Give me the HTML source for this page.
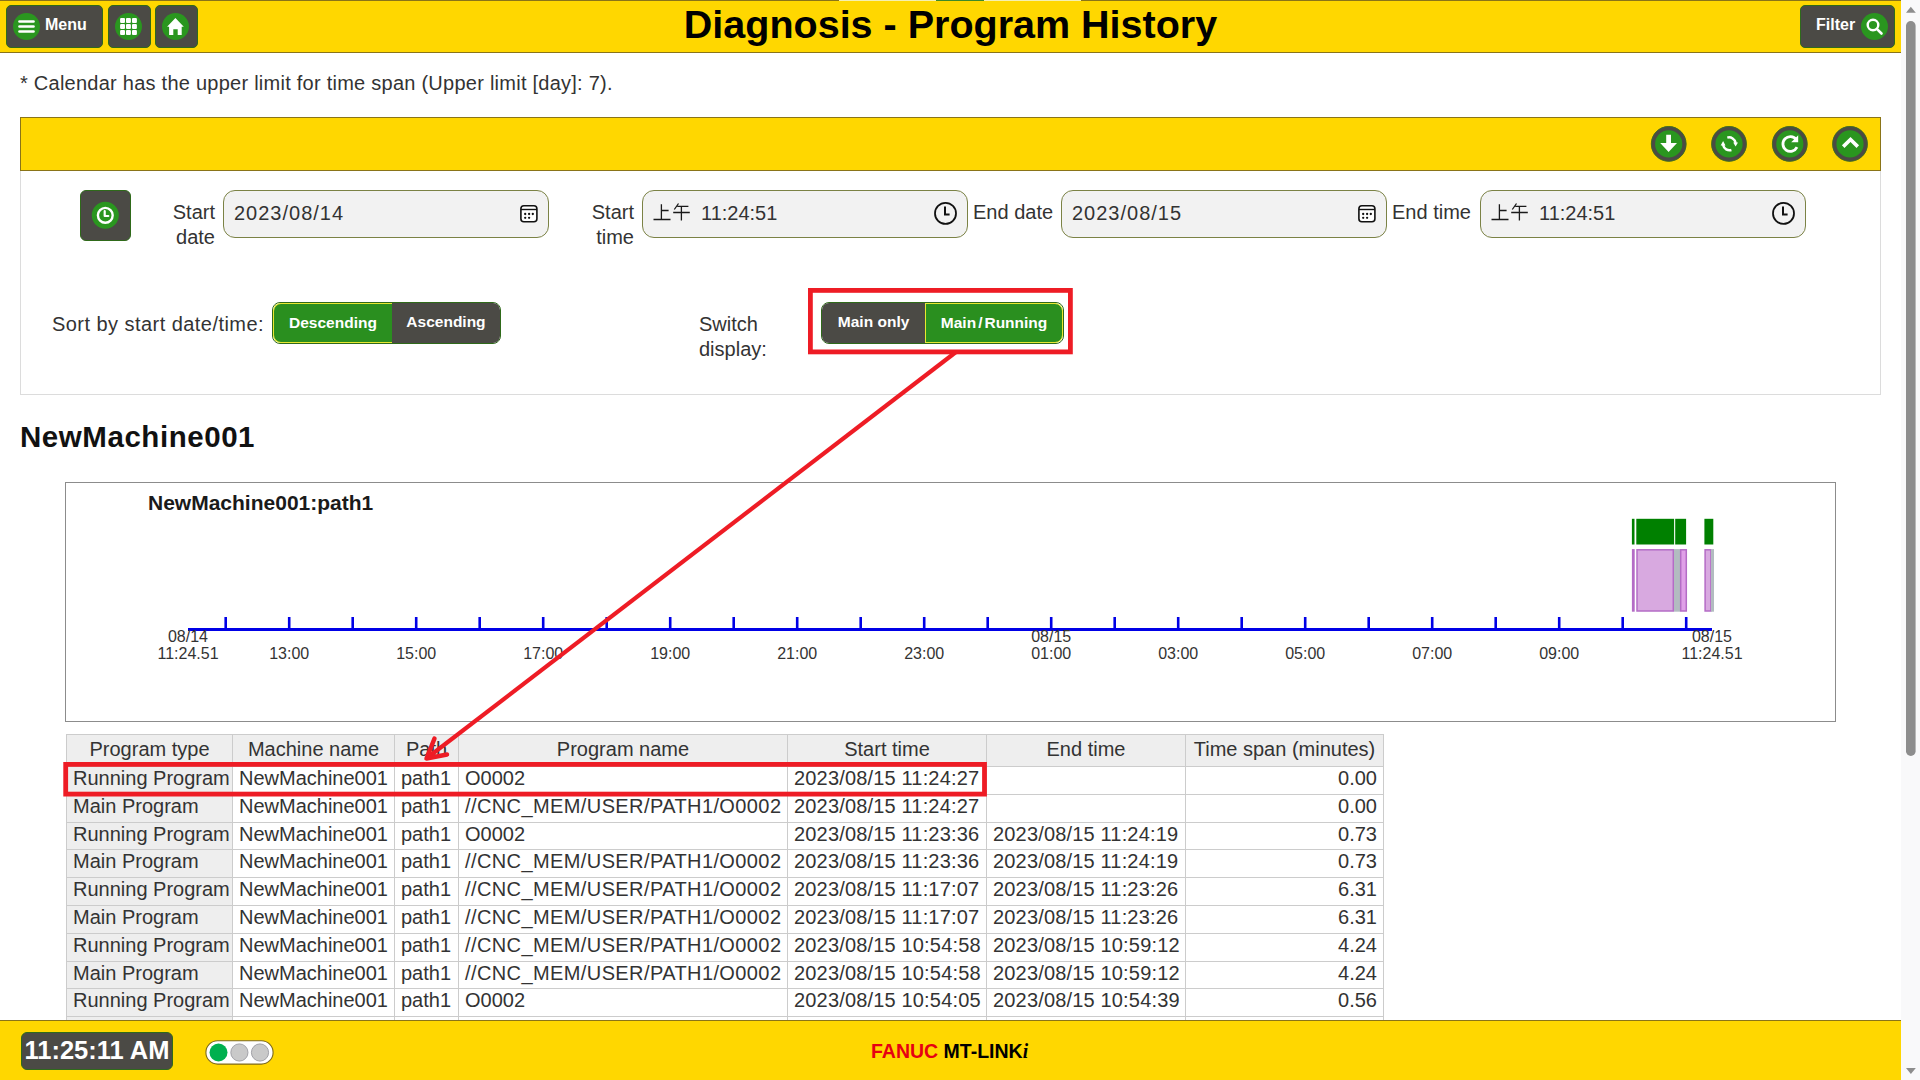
<!DOCTYPE html>
<html><head><meta charset="utf-8">
<style>
*{box-sizing:border-box;margin:0;padding:0}
html,body{width:1920px;height:1080px;overflow:hidden;background:#fff;font-family:"Liberation Sans",sans-serif;color:#222}
.abs{position:absolute}
.hdr{position:absolute;left:0;top:0;width:1901px;height:53px;background:#ffd700;border-top:1px solid #8a7418;border-bottom:1px solid #8a7418}
.hbtn{position:absolute;top:5px;height:43px;background:#4b4a45;border:1px solid #2f6a1a;border-radius:5px}
.gc{position:absolute;border-radius:50%;background:#2a961f}
.title{position:absolute;left:0;width:1901px;top:-1px;text-align:center;font-weight:bold;font-size:39.5px;line-height:50px;color:#000}
.sb{position:absolute;left:1901px;top:0;width:19px;height:1080px;background:#f9f9fa}
.panel{position:absolute;left:20px;top:117px;width:1861px;height:278px;border:1px solid #dcdcdc;background:#fff}
.phdr{position:absolute;left:20px;top:117px;width:1861px;height:54px;background:#ffd700;border:1px solid #8a7418}
.cbtn{position:absolute;top:126px;width:35px;height:35px;border-radius:50%;background:#2a961f;border:3.5px solid #4b4a45}
.lbl{position:absolute;font-size:20px;line-height:25px;color:#333}
.inp{position:absolute;top:190px;width:326px;height:48px;background:#f2f2f2;border:1.5px solid #7b8245;border-radius:12px}
.inp span{position:absolute;left:10px;top:0;line-height:44px;font-size:20px;letter-spacing:1px;color:#333}
.tog{position:absolute;height:42px;border-radius:8px;overflow:hidden;border:1px solid #2f6a1a;display:flex}
.tog div{height:100%;color:#fff;font-weight:bold;font-size:15.5px;line-height:38px;text-align:center}
.on{background:#2a8f1f}
.off{background:#4b4a45}
.tbl{position:absolute;left:66px;top:734px;border-collapse:collapse;font-size:20px;color:#222}
.tbl td,.tbl th{border:1px solid #cfcfcf;padding:0 6px;white-space:nowrap;font-weight:normal;height:28px}
.tbl th{background:#eeeeee;height:32px;text-align:center}
.tbl td:first-child{background:#eeeeee}
.tbl td.r{text-align:right}
.ftr{position:absolute;left:0;top:1020px;width:1901px;height:60px;background:#ffd700;border-top:1px solid #8a7418}
.th{position:absolute;height:32px;line-height:30px;text-align:center;font-size:20px;color:#333;white-space:nowrap}
.td{position:absolute;height:28px;line-height:25.5px;padding:0 6px;font-size:20px;color:#333;white-space:nowrap}
.td.r{text-align:right}
.jp{width:40px;height:20px}
</style></head><body>

<!-- header -->
<div class="hdr">
  <div style="position:absolute;left:839px;top:-1px;width:242px;height:1px;background:#f5f0b0"></div>
  <div style="position:absolute;left:936px;top:-1px;width:48px;height:1px;background:#3d8a2a"></div>
</div>
<div class="hbtn" style="left:6px;width:97px"></div>
<div class="gc" style="left:13px;top:13px;width:27px;height:27px"></div>
<svg class="abs" style="left:13px;top:13px" width="27" height="27" viewBox="0 0 27 27"><g stroke="#fff" stroke-width="2.6" stroke-linecap="round"><line x1="6.5" y1="8.5" x2="20.5" y2="8.5"/><line x1="6.5" y1="13.5" x2="20.5" y2="13.5"/><line x1="6.5" y1="18.5" x2="20.5" y2="18.5"/></g></svg>
<div class="abs" style="left:45px;top:14px;font-size:16px;font-weight:bold;color:#fff;line-height:22px">Menu</div>
<div class="hbtn" style="left:108px;width:43px"></div>
<div class="gc" style="left:115px;top:13px;width:27px;height:27px"></div>
<svg class="abs" style="left:115px;top:13px" width="27" height="27" viewBox="0 0 27 27"><g fill="#fff"><rect x="5.1" y="5.1" width="4.9" height="4.9" rx="1"/><rect x="11.0" y="5.1" width="4.9" height="4.9" rx="1"/><rect x="17.0" y="5.1" width="4.9" height="4.9" rx="1"/><rect x="5.1" y="11.0" width="4.9" height="4.9" rx="1"/><rect x="11.0" y="11.0" width="4.9" height="4.9" rx="1"/><rect x="17.0" y="11.0" width="4.9" height="4.9" rx="1"/><rect x="5.1" y="17.1" width="4.9" height="4.9" rx="1"/><rect x="11.0" y="17.1" width="4.9" height="4.9" rx="1"/><rect x="17.0" y="17.1" width="4.9" height="4.9" rx="1"/></g></svg>
<div class="hbtn" style="left:155px;width:43px"></div>
<div class="gc" style="left:162px;top:13px;width:27px;height:27px"></div>
<svg class="abs" style="left:162px;top:13px" width="27" height="27" viewBox="0 0 27 27"><path fill="#fff" d="M13.4 5.1 L21.8 13.75 L19.7 13.75 L19.7 22 L15.7 22 L15.7 16.3 L11.3 16.3 L11.3 22 L7.1 22 L7.1 13.75 L5.1 13.75 Z"/></svg>
<div class="title">Diagnosis - Program History</div>
<div class="hbtn" style="left:1800px;width:95px"></div>
<div class="abs" style="left:1816px;top:14px;font-size:16px;font-weight:bold;color:#fff;line-height:22px">Filter</div>
<div class="gc" style="left:1861px;top:13px;width:27px;height:27px"></div>
<svg class="abs" style="left:1861px;top:13px" width="27" height="27" viewBox="0 0 27 27"><circle cx="12" cy="12" r="5.3" fill="none" stroke="#fff" stroke-width="2.4"/><line x1="15.8" y1="15.8" x2="20.5" y2="20.5" stroke="#fff" stroke-width="2.6" stroke-linecap="round"/></svg>

<!-- scrollbar -->
<div class="sb">
  <svg class="abs" style="left:0;top:0" width="19" height="1080"><path d="M5 12.8 L9.8 6.8 L14.8 12.8 Z" fill="#8d8d8d"/><rect x="5" y="21" width="9.6" height="735" rx="4.8" fill="#8d8d8d"/><path d="M5 1068 L14.8 1068 L9.9 1074 Z" fill="#8d8d8d"/></svg>
</div>

<!-- notice -->
<div class="abs" style="left:20px;top:71px;font-size:20px;line-height:25px;letter-spacing:0.25px;color:#333">* Calendar has the upper limit for time span (Upper limit [day]: 7).</div>

<!-- panel -->
<div class="panel"></div>
<div class="phdr"></div>
<svg class="abs" style="left:1640px;top:120px" width="230" height="50" viewBox="1640 120 230 50">
<g fill="#2a961f" stroke="#4b4a45" stroke-width="4"><circle cx="1668.7" cy="143.9" r="15.6"/><circle cx="1729" cy="143.9" r="15.6"/><circle cx="1789.8" cy="143.9" r="15.6"/><circle cx="1850" cy="143.9" r="15.6"/></g><g fill="none" stroke="#3f6e1c" stroke-width="0.9"><circle cx="1668.7" cy="143.9" r="17.4"/><circle cx="1729" cy="143.9" r="17.4"/><circle cx="1789.8" cy="143.9" r="17.4"/><circle cx="1850" cy="143.9" r="17.4"/></g>
<path fill="#fff" d="M1666.2 134.8 H1671 V143.1 H1677 L1668.6 152 L1660.2 143.1 H1666.2 Z"/>
<g fill="none" stroke="#fff" stroke-width="2.5"><path d="M1727.3 137.6 A6.6 6.6 0 0 1 1735.6 143"/><path d="M1731.4 150 A6.6 6.6 0 0 1 1723.1 145"/></g>
<path fill="#fff" d="M1733.2 142.4 L1738 142.4 L1735.6 146.6 Z M1720.7 145.4 L1725.5 145.4 L1723.1 141 Z"/>
<path d="M1797 147.2 A7.4 7.4 0 1 1 1796.3 139.6" fill="none" stroke="#fff" stroke-width="2.8"/>
<path fill="#fff" d="M1798.2 135.2 V142.2 H1791.2 Z"/>
<path d="M1843.2 146.6 L1850.5 139.5 L1857.8 146.6" fill="none" stroke="#fff" stroke-width="3.6"/>
</svg>

<!-- form -->
<div class="abs" style="left:80px;top:190px;width:51px;height:51px;background:#4b4a45;border:1px solid #2f6a1a;border-radius:6px"></div>
<svg class="abs" style="left:91px;top:201px" width="29" height="29" viewBox="0 0 29 29"><circle cx="14.3" cy="14.3" r="13.5" fill="#2a961f"/><circle cx="14.3" cy="14.3" r="7.4" fill="none" stroke="#fff" stroke-width="2.4"/><path d="M13.7 10.2 V15 H17.3" fill="none" stroke="#fff" stroke-width="2.2" stroke-linecap="round" stroke-linejoin="round"/></svg>

<div class="lbl" style="left:140px;top:200px;width:75px;text-align:right">Start<br>date</div>
<div class="inp" style="left:223px"><span>2023/08/14</span></div>
<svg class="abs" style="left:518px;top:203px" width="22" height="22" viewBox="0 0 22 22"><rect x="2.9" y="2.7" width="16" height="16" rx="3" fill="#fff" stroke="#111" stroke-width="1.6"/><line x1="2.9" y1="6.5" x2="18.9" y2="6.5" stroke="#111" stroke-width="1.4"/><g fill="#111"><circle cx="7.2" cy="11" r="1.15"/><circle cx="11.1" cy="11" r="1.15"/><circle cx="14.8" cy="11" r="1.15"/><circle cx="7.2" cy="14.8" r="1.15"/><circle cx="11.1" cy="14.8" r="1.15"/></g></svg>

<div class="lbl" style="left:560px;top:200px;width:74px;text-align:right">Start<br>time</div>
<div class="inp" style="left:642px"><span style="left:58px;letter-spacing:0">11:24:51</span></div>
<svg class="abs" style="left:650px;top:200px" width="45" height="24" viewBox="650 200 45 24"><g stroke="#1a1a1a" stroke-width="1.3" fill="none"><path d="M661.4 204.3 V219.5 M661.4 210.5 H668.6 M653.5 219.5 H670.5 M678.5 203.5 L674.3 209.5 M677.3 206.4 H688.4 M673.2 212.5 H689.8 M681.4 206.4 V220.6"/></g></svg>
<svg class="abs" style="left:932px;top:201px" width="26" height="26" viewBox="0 0 26 26"><circle cx="13.5" cy="12.4" r="10.5" fill="none" stroke="#111" stroke-width="1.8"/><path d="M13 5.4 V13.5 H17.6" fill="none" stroke="#111" stroke-width="2"/></svg>

<div class="lbl" style="left:973px;top:200px">End date</div>
<div class="inp" style="left:1061px"><span>2023/08/15</span></div>
<svg class="abs" style="left:1356px;top:203px" width="22" height="22" viewBox="0 0 22 22"><rect x="2.9" y="2.7" width="16" height="16" rx="3" fill="#fff" stroke="#111" stroke-width="1.6"/><line x1="2.9" y1="6.5" x2="18.9" y2="6.5" stroke="#111" stroke-width="1.4"/><g fill="#111"><circle cx="7.2" cy="11" r="1.15"/><circle cx="11.1" cy="11" r="1.15"/><circle cx="14.8" cy="11" r="1.15"/><circle cx="7.2" cy="14.8" r="1.15"/><circle cx="11.1" cy="14.8" r="1.15"/></g></svg>

<div class="lbl" style="left:1392px;top:200px">End time</div>
<div class="inp" style="left:1480px"><span style="left:58px;letter-spacing:0">11:24:51</span></div>
<svg class="abs" style="left:1488px;top:200px" width="45" height="24" viewBox="650 200 45 24"><g stroke="#1a1a1a" stroke-width="1.3" fill="none"><path d="M661.4 204.3 V219.5 M661.4 210.5 H668.6 M653.5 219.5 H670.5 M678.5 203.5 L674.3 209.5 M677.3 206.4 H688.4 M673.2 212.5 H689.8 M681.4 206.4 V220.6"/></g></svg>
<svg class="abs" style="left:1770px;top:201px" width="26" height="26" viewBox="0 0 26 26"><circle cx="13.5" cy="12.4" r="10.5" fill="none" stroke="#111" stroke-width="1.8"/><path d="M13 5.4 V13.5 H17.6" fill="none" stroke="#111" stroke-width="2"/></svg>

<div class="lbl" style="left:52px;top:312px;letter-spacing:0.45px">Sort by start date/time:</div>
<div class="tog" style="left:272px;top:302px;width:229px">
  <div class="on" style="width:120px;border:1px solid #e8e830;border-right:none;border-radius:8px 0 0 8px">Descending</div>
  <div class="off" style="width:109px">Ascending</div>
</div>

<div class="lbl" style="left:699px;top:312px">Switch<br>display:</div>
<div class="tog" style="left:821px;top:302px;width:243px">
  <div class="off" style="width:104px">Main only</div>
  <div class="on" style="width:139px;border:1px solid #e8e830;border-radius:0 8px 8px 0">Main<span style="margin:0 2px">/</span>Running</div>
</div>


<!-- machine -->
<div class="abs" style="left:20px;top:420px;font-size:29.5px;font-weight:bold;line-height:34px;letter-spacing:0.55px;color:#111">NewMachine001</div>

<!-- chart -->
<div class="abs" style="left:65px;top:482px;width:1771px;height:240px;border:1px solid #8c8c8c"></div>
<div class="abs" style="left:148px;top:490px;font-size:21px;font-weight:bold;line-height:25px;color:#1a1a1a">NewMachine001:path1</div>
<svg class="abs" style="left:0;top:0" width="1920" height="1080" viewBox="0 0 1920 1080">
<rect x="188" y="628" width="1524" height="3" fill="#0000e6"/>
<rect x="224.40" y="617" width="2.6" height="12" fill="#0000e6"/>
<rect x="287.90" y="617" width="2.6" height="12" fill="#0000e6"/>
<rect x="351.40" y="617" width="2.6" height="12" fill="#0000e6"/>
<rect x="414.90" y="617" width="2.6" height="12" fill="#0000e6"/>
<rect x="478.40" y="617" width="2.6" height="12" fill="#0000e6"/>
<rect x="541.90" y="617" width="2.6" height="12" fill="#0000e6"/>
<rect x="605.40" y="617" width="2.6" height="12" fill="#0000e6"/>
<rect x="668.90" y="617" width="2.6" height="12" fill="#0000e6"/>
<rect x="732.40" y="617" width="2.6" height="12" fill="#0000e6"/>
<rect x="795.90" y="617" width="2.6" height="12" fill="#0000e6"/>
<rect x="859.40" y="617" width="2.6" height="12" fill="#0000e6"/>
<rect x="922.90" y="617" width="2.6" height="12" fill="#0000e6"/>
<rect x="986.40" y="617" width="2.6" height="12" fill="#0000e6"/>
<rect x="1049.90" y="617" width="2.6" height="12" fill="#0000e6"/>
<rect x="1113.40" y="617" width="2.6" height="12" fill="#0000e6"/>
<rect x="1176.90" y="617" width="2.6" height="12" fill="#0000e6"/>
<rect x="1240.40" y="617" width="2.6" height="12" fill="#0000e6"/>
<rect x="1303.90" y="617" width="2.6" height="12" fill="#0000e6"/>
<rect x="1367.40" y="617" width="2.6" height="12" fill="#0000e6"/>
<rect x="1430.90" y="617" width="2.6" height="12" fill="#0000e6"/>
<rect x="1494.40" y="617" width="2.6" height="12" fill="#0000e6"/>
<rect x="1557.90" y="617" width="2.6" height="12" fill="#0000e6"/>
<rect x="1621.40" y="617" width="2.6" height="12" fill="#0000e6"/>
<rect x="1684.90" y="617" width="2.6" height="12" fill="#0000e6"/>
<rect x="1631.9" y="518.8" width="2.6" height="25.7" fill="#008000"/>
<rect x="1636.3" y="518.8" width="37.8" height="25.7" fill="#008000"/>
<rect x="1675.2" y="518.8" width="10.9" height="25.7" fill="#008000"/>
<rect x="1704.4" y="518.8" width="8.9" height="25.7" fill="#008000"/>
<rect x="1631.9" y="549.1" width="2.8" height="62.6" fill="#b46cc6"/>
<rect x="1637" y="549.8" width="36.3" height="61.2" fill="#d8a9e0" stroke="#b46cc6" stroke-width="1.5"/>
<rect x="1674" y="549.1" width="6" height="62.6" fill="#b2bcc0"/>
<rect x="1680.7" y="549.8" width="5.6" height="61.2" fill="#e0a0e8" stroke="#b46cc6" stroke-width="1.5"/>
<rect x="1705.1" y="549.8" width="5.8" height="61.2" fill="#d8a9e0" stroke="#b46cc6" stroke-width="1.5"/>
<rect x="1711" y="549.1" width="3" height="62.6" fill="#b2bcc0"/>
<text x="188.0" y="641.5" text-anchor="middle" font-size="16" fill="#333">08/14</text>
<text x="188.0" y="658.7" text-anchor="middle" font-size="16" fill="#333">11:24.51</text>
<text x="1712.0" y="641.5" text-anchor="middle" font-size="16" fill="#333">08/15</text>
<text x="1712.0" y="658.7" text-anchor="middle" font-size="16" fill="#333">11:24.51</text>
<text x="1051.2" y="641.5" text-anchor="middle" font-size="16" fill="#333">08/15</text>
<text x="1051.2" y="658.7" text-anchor="middle" font-size="16" fill="#333">01:00</text>
<text x="289.2" y="658.7" text-anchor="middle" font-size="16" fill="#333">13:00</text>
<text x="416.2" y="658.7" text-anchor="middle" font-size="16" fill="#333">15:00</text>
<text x="543.2" y="658.7" text-anchor="middle" font-size="16" fill="#333">17:00</text>
<text x="670.2" y="658.7" text-anchor="middle" font-size="16" fill="#333">19:00</text>
<text x="797.2" y="658.7" text-anchor="middle" font-size="16" fill="#333">21:00</text>
<text x="924.2" y="658.7" text-anchor="middle" font-size="16" fill="#333">23:00</text>
<text x="1178.2" y="658.7" text-anchor="middle" font-size="16" fill="#333">03:00</text>
<text x="1305.2" y="658.7" text-anchor="middle" font-size="16" fill="#333">05:00</text>
<text x="1432.2" y="658.7" text-anchor="middle" font-size="16" fill="#333">07:00</text>
<text x="1559.2" y="658.7" text-anchor="middle" font-size="16" fill="#333">09:00</text>
</svg>

<div class="abs" style="left:66px;top:734px;width:1318px;height:286px;overflow:hidden">
<div class="abs" style="left:0;top:0;width:1318px;height:32px;background:#eeeeee"></div>
<div class="abs" style="left:0;top:32px;width:166px;height:300px;background:#eeeeee"></div>
<div class="abs" style="left:0px;top:0;width:1px;height:300px;background:#cccccc"></div>
<div class="abs" style="left:166px;top:0;width:1px;height:300px;background:#cccccc"></div>
<div class="abs" style="left:328px;top:0;width:1px;height:300px;background:#cccccc"></div>
<div class="abs" style="left:392px;top:0;width:1px;height:300px;background:#cccccc"></div>
<div class="abs" style="left:721px;top:0;width:1px;height:300px;background:#cccccc"></div>
<div class="abs" style="left:920px;top:0;width:1px;height:300px;background:#cccccc"></div>
<div class="abs" style="left:1119px;top:0;width:1px;height:300px;background:#cccccc"></div>
<div class="abs" style="left:1317px;top:0;width:1px;height:300px;background:#cccccc"></div>
<div class="abs" style="left:0;top:0.0px;width:1318px;height:1px;background:#cccccc"></div>
<div class="abs" style="left:0;top:32.0px;width:1318px;height:1px;background:#cccccc"></div>
<div class="abs" style="left:0;top:59.8px;width:1318px;height:1px;background:#cccccc"></div>
<div class="abs" style="left:0;top:87.6px;width:1318px;height:1px;background:#cccccc"></div>
<div class="abs" style="left:0;top:115.4px;width:1318px;height:1px;background:#cccccc"></div>
<div class="abs" style="left:0;top:143.2px;width:1318px;height:1px;background:#cccccc"></div>
<div class="abs" style="left:0;top:171.0px;width:1318px;height:1px;background:#cccccc"></div>
<div class="abs" style="left:0;top:198.8px;width:1318px;height:1px;background:#cccccc"></div>
<div class="abs" style="left:0;top:226.6px;width:1318px;height:1px;background:#cccccc"></div>
<div class="abs" style="left:0;top:254.4px;width:1318px;height:1px;background:#cccccc"></div>
<div class="abs" style="left:0;top:282.2px;width:1318px;height:1px;background:#cccccc"></div>
<div class="abs" style="left:0;top:310.0px;width:1318px;height:1px;background:#cccccc"></div>
<div class="th" style="left:1px;width:165px;top:0">Program type</div>
<div class="th" style="left:167px;width:161px;top:0">Machine name</div>
<div class="th" style="left:329px;width:63px;top:0">Path</div>
<div class="th" style="left:393px;width:328px;top:0">Program name</div>
<div class="th" style="left:722px;width:198px;top:0">Start time</div>
<div class="th" style="left:921px;width:198px;top:0">End time</div>
<div class="th" style="left:1120px;width:197px;top:0">Time span (minutes)</div>
<div class="td" style="left:1px;width:165px;top:32.0px">Running Program</div>
<div class="td" style="left:167px;width:161px;top:32.0px">NewMachine001</div>
<div class="td" style="left:329px;width:63px;top:32.0px">path1</div>
<div class="td" style="left:393px;width:328px;top:32.0px">O0002</div>
<div class="td" style="left:722px;width:198px;top:32.0px;letter-spacing:0.17px">2023/08/15 11:24:27</div>
<div class="td" style="left:921px;width:198px;top:32.0px;letter-spacing:0.17px"></div>
<div class="td r" style="left:1120px;width:197px;top:32.0px">0.00</div>
<div class="td" style="left:1px;width:165px;top:59.8px">Main Program</div>
<div class="td" style="left:167px;width:161px;top:59.8px">NewMachine001</div>
<div class="td" style="left:329px;width:63px;top:59.8px">path1</div>
<div class="td" style="left:393px;width:328px;top:59.8px;letter-spacing:0.4px">//CNC_MEM/USER/PATH1/O0002</div>
<div class="td" style="left:722px;width:198px;top:59.8px;letter-spacing:0.17px">2023/08/15 11:24:27</div>
<div class="td" style="left:921px;width:198px;top:59.8px;letter-spacing:0.17px"></div>
<div class="td r" style="left:1120px;width:197px;top:59.8px">0.00</div>
<div class="td" style="left:1px;width:165px;top:87.6px">Running Program</div>
<div class="td" style="left:167px;width:161px;top:87.6px">NewMachine001</div>
<div class="td" style="left:329px;width:63px;top:87.6px">path1</div>
<div class="td" style="left:393px;width:328px;top:87.6px">O0002</div>
<div class="td" style="left:722px;width:198px;top:87.6px;letter-spacing:0.17px">2023/08/15 11:23:36</div>
<div class="td" style="left:921px;width:198px;top:87.6px;letter-spacing:0.17px">2023/08/15 11:24:19</div>
<div class="td r" style="left:1120px;width:197px;top:87.6px">0.73</div>
<div class="td" style="left:1px;width:165px;top:115.4px">Main Program</div>
<div class="td" style="left:167px;width:161px;top:115.4px">NewMachine001</div>
<div class="td" style="left:329px;width:63px;top:115.4px">path1</div>
<div class="td" style="left:393px;width:328px;top:115.4px;letter-spacing:0.4px">//CNC_MEM/USER/PATH1/O0002</div>
<div class="td" style="left:722px;width:198px;top:115.4px;letter-spacing:0.17px">2023/08/15 11:23:36</div>
<div class="td" style="left:921px;width:198px;top:115.4px;letter-spacing:0.17px">2023/08/15 11:24:19</div>
<div class="td r" style="left:1120px;width:197px;top:115.4px">0.73</div>
<div class="td" style="left:1px;width:165px;top:143.2px">Running Program</div>
<div class="td" style="left:167px;width:161px;top:143.2px">NewMachine001</div>
<div class="td" style="left:329px;width:63px;top:143.2px">path1</div>
<div class="td" style="left:393px;width:328px;top:143.2px;letter-spacing:0.4px">//CNC_MEM/USER/PATH1/O0002</div>
<div class="td" style="left:722px;width:198px;top:143.2px;letter-spacing:0.17px">2023/08/15 11:17:07</div>
<div class="td" style="left:921px;width:198px;top:143.2px;letter-spacing:0.17px">2023/08/15 11:23:26</div>
<div class="td r" style="left:1120px;width:197px;top:143.2px">6.31</div>
<div class="td" style="left:1px;width:165px;top:171.0px">Main Program</div>
<div class="td" style="left:167px;width:161px;top:171.0px">NewMachine001</div>
<div class="td" style="left:329px;width:63px;top:171.0px">path1</div>
<div class="td" style="left:393px;width:328px;top:171.0px;letter-spacing:0.4px">//CNC_MEM/USER/PATH1/O0002</div>
<div class="td" style="left:722px;width:198px;top:171.0px;letter-spacing:0.17px">2023/08/15 11:17:07</div>
<div class="td" style="left:921px;width:198px;top:171.0px;letter-spacing:0.17px">2023/08/15 11:23:26</div>
<div class="td r" style="left:1120px;width:197px;top:171.0px">6.31</div>
<div class="td" style="left:1px;width:165px;top:198.8px">Running Program</div>
<div class="td" style="left:167px;width:161px;top:198.8px">NewMachine001</div>
<div class="td" style="left:329px;width:63px;top:198.8px">path1</div>
<div class="td" style="left:393px;width:328px;top:198.8px;letter-spacing:0.4px">//CNC_MEM/USER/PATH1/O0002</div>
<div class="td" style="left:722px;width:198px;top:198.8px;letter-spacing:0.17px">2023/08/15 10:54:58</div>
<div class="td" style="left:921px;width:198px;top:198.8px;letter-spacing:0.17px">2023/08/15 10:59:12</div>
<div class="td r" style="left:1120px;width:197px;top:198.8px">4.24</div>
<div class="td" style="left:1px;width:165px;top:226.6px">Main Program</div>
<div class="td" style="left:167px;width:161px;top:226.6px">NewMachine001</div>
<div class="td" style="left:329px;width:63px;top:226.6px">path1</div>
<div class="td" style="left:393px;width:328px;top:226.6px;letter-spacing:0.4px">//CNC_MEM/USER/PATH1/O0002</div>
<div class="td" style="left:722px;width:198px;top:226.6px;letter-spacing:0.17px">2023/08/15 10:54:58</div>
<div class="td" style="left:921px;width:198px;top:226.6px;letter-spacing:0.17px">2023/08/15 10:59:12</div>
<div class="td r" style="left:1120px;width:197px;top:226.6px">4.24</div>
<div class="td" style="left:1px;width:165px;top:254.4px">Running Program</div>
<div class="td" style="left:167px;width:161px;top:254.4px">NewMachine001</div>
<div class="td" style="left:329px;width:63px;top:254.4px">path1</div>
<div class="td" style="left:393px;width:328px;top:254.4px">O0002</div>
<div class="td" style="left:722px;width:198px;top:254.4px;letter-spacing:0.17px">2023/08/15 10:54:05</div>
<div class="td" style="left:921px;width:198px;top:254.4px;letter-spacing:0.17px">2023/08/15 10:54:39</div>
<div class="td r" style="left:1120px;width:197px;top:254.4px">0.56</div>
<div class="td" style="left:1px;width:165px;top:282.2px">Main Program</div>
<div class="td" style="left:167px;width:161px;top:282.2px">NewMachine001</div>
<div class="td" style="left:329px;width:63px;top:282.2px">path1</div>
<div class="td" style="left:393px;width:328px;top:282.2px;letter-spacing:0.4px">//CNC_MEM/USER/PATH1/O0002</div>
<div class="td" style="left:722px;width:198px;top:282.2px;letter-spacing:0.17px">2023/08/15 10:54:05</div>
<div class="td" style="left:921px;width:198px;top:282.2px;letter-spacing:0.17px">2023/08/15 10:54:39</div>
<div class="td r" style="left:1120px;width:197px;top:282.2px">0.56</div>
</div>
<!-- annotations -->
<svg class="abs" style="left:0;top:0" width="1920" height="1080" viewBox="0 0 1920 1080">
<rect x="810.4" y="290.4" width="260" height="61.5" fill="none" stroke="#ee1c25" stroke-width="4.8"/>
<rect x="65.7" y="764.4" width="918.8" height="29.7" fill="none" stroke="#ee1c25" stroke-width="4.8"/>
<path d="M956 352 L427 758" stroke="#ee1c25" stroke-width="4.2" fill="none"/>
<path d="M434.5 738.5 L426.5 758.5 L447 754.5" stroke="#ee1c25" stroke-width="4.5" fill="none" stroke-linecap="round" stroke-linejoin="round"/>
</svg>

<!-- footer -->
<div class="ftr"></div>
<div class="abs" style="left:21px;top:1032px;width:152px;height:38px;background:#4b4a45;border:1px solid #2f6a1a;border-radius:6px"></div>
<div class="abs" style="left:21px;top:1032px;width:152px;line-height:37px;text-align:center;font-size:25.5px;font-weight:bold;color:#fff">11:25:11 AM</div>
<svg class="abs" style="left:200px;top:1035px" width="80" height="35" viewBox="200 1035 80 35"><rect x="205.9" y="1040.7" width="67.2" height="23.4" rx="11.7" fill="#fff" stroke="#7d6a1c" stroke-width="1.1"/><circle cx="218.5" cy="1052.5" r="9" fill="#00b04f"/><circle cx="239.4" cy="1052.5" r="8.6" fill="#c9c9c9" stroke="#9a9aa0" stroke-width="0.9"/><circle cx="260" cy="1052.5" r="8.6" fill="#c9c9c9" stroke="#9a9aa0" stroke-width="0.9"/></svg>
<div class="abs" style="left:871px;top:1038px;font-size:19.5px;font-weight:bold;line-height:24px;color:#000;transform:scaleY(1.065);transform-origin:0 0"><span style="color:#e60012">FANUC</span> MT-LINK<i style="font-family:'Liberation Serif',serif">i</i></div>

</body></html>
